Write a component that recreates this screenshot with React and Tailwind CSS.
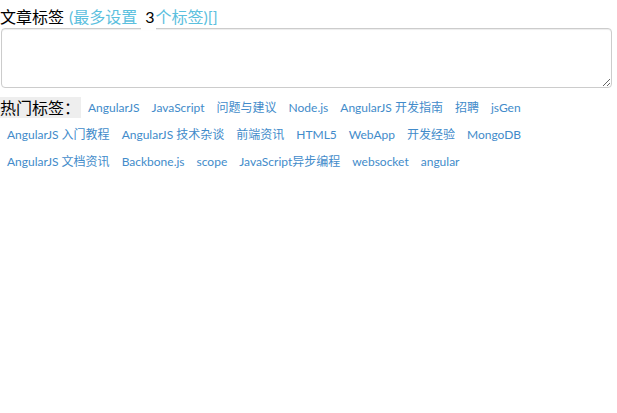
const hotTags = [
  "AngularJS",
  "JavaScript",
  "问题与建议",
  "Node.js",
  "AngularJS 开发指南",
  "招聘",
  "jsGen",
  "AngularJS 入门教程",
  "AngularJS 技术杂谈",
  "前端资讯",
  "HTML5",
  "WebApp",
  "开发经验",
  "MongoDB",
  "AngularJS 文档资讯",
  "Backbone.js",
  "scope",
  "JavaScript异步编程",
  "websocket",
  "angular",
];

const App = () => {
  return (
    <div
      className="w-[617px] h-[413px] bg-white text-black"
      style={{ fontFamily: 'Lato, "Noto Sans CJK SC", sans-serif' }}
    >
      <div className="flex items-end h-[28px] text-[16px] leading-[22px] pt-[2px]">
        <span>文章标签</span>
        <span className="ml-[5px] text-[#5bc0de]">(最多设置</span>
        <span className="relative z-10 bg-white ml-[4px] pl-[4px] pr-[1px] h-[24px] leading-[22px] -mb-[2px]">3</span>
        <span className="text-[#5bc0de]">个标签)[]</span>
      </div>
      <div className="pl-[1px] pr-[5px]">
        <textarea className="block w-full h-[60px] border border-[#ccc] rounded-[4px] shadow-[inset_0_1px_1px_rgba(0,0,0,0.075)] outline-none resize-y" />
      </div>
      <div className="flex flex-wrap items-center pt-[6px] pr-[10px]">
        <span
          className="bg-[#eee] text-[16px] leading-[21px] w-[81px]"
          style={{ fontFamily: '"Noto Sans CJK SC", sans-serif' }}
        >
          热门标签：
        </span>
        {hotTags.map((tag) => (
          <a
            key={tag}
            href="#"
            className="ml-[7px] mr-[5px] py-[4px] text-[12px] leading-[19px] text-[#428bca]"
          >
            {tag}
          </a>
        ))}
      </div>
    </div>
  );
};

export default App;
